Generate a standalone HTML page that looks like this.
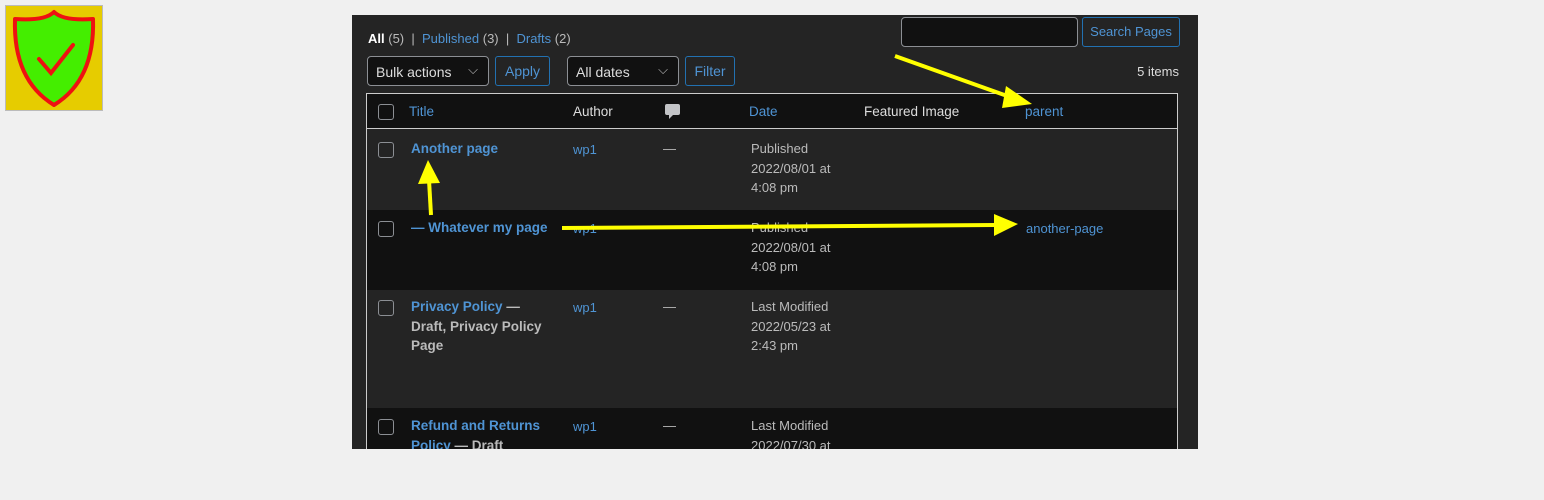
<!DOCTYPE html>
<html><head><style>
body{margin:0;width:1544px;height:500px;background:#f0f0f0;position:relative;overflow:hidden;font-family:"Liberation Sans",sans-serif;font-size:13px}
.p{position:absolute;left:352px;top:15px;width:846px;height:434px;background:#242424;overflow:hidden}
.a{position:absolute;white-space:nowrap}
.l{color:#4f94d4}
.w{color:#ddd}
.g{color:#bbb}
.box{position:absolute;border:1px solid #8c8f94;border-radius:4px;box-sizing:border-box}
.btn{position:absolute;border:1px solid #2271b1;border-radius:3px;box-sizing:border-box;color:#4f94d4;text-align:center}
.cb{position:absolute;width:14px;height:14px;border:1px solid #8c8f94;border-radius:3px;left:26px}
.row{position:absolute;left:14px;width:812px}
.t{font-size:13.5px}
</style></head><body>
<svg style="position:absolute;left:5px;top:5px" width="98" height="106"><rect x="0.5" y="0.5" width="97" height="105" fill="#e6cc00" stroke="#bbb"/>
<path d="M49 7 Q40 16 10 14 Q8 75 49 100 Q90 75 88 14 Q58 16 49 7Z" fill="#44ee00" stroke="#ee1111" stroke-width="4" stroke-linejoin="round"/>
<path d="M34 54 L46 68 L68 40" fill="none" stroke="#ee1111" stroke-width="4" stroke-linecap="round"/></svg>
<div class="p">
<div class="a w" style="left:16px;top:16px"><b style="color:#fff">All</b> <span class="g">(5)</span> <span class="g">&nbsp;|&nbsp;</span> <span class="l">Published</span> <span class="g">(3)</span> <span class="g">&nbsp;|&nbsp;</span> <span class="l">Drafts</span> <span class="g">(2)</span></div>
<div class="box" style="left:15px;top:41px;width:122px;height:30px;background:#111"><span class="a w" style="left:8px;top:7px;font-size:14px">Bulk actions</span><span class="a g" style="right:10px;top:5px">⌵</span></div>
<div class="btn" style="left:143px;top:41px;width:55px;height:30px;line-height:28px;font-size:14px">Apply</div>
<div class="box" style="left:215px;top:41px;width:112px;height:30px;background:#111"><span class="a w" style="left:8px;top:7px;font-size:14px">All dates</span><span class="a g" style="right:10px;top:5px">⌵</span></div>
<div class="btn" style="left:333px;top:41px;width:50px;height:30px;line-height:28px;font-size:14px">Filter</div>
<div class="box" style="left:549px;top:2px;width:177px;height:30px;background:#111"></div>
<div class="btn" style="left:730px;top:2px;width:98px;height:30px;line-height:28px">Search Pages</div>
<div class="a w" style="right:19px;top:49px">5 items</div>
<div class="row" style="top:195px;height:80px;background:#111"></div>
<div class="row" style="top:393px;height:80px;background:#111"></div>
<div class="row" style="top:78px;height:36px;background:#111;border:1px solid #ccc;box-sizing:border-box"></div>
<div class="row" style="top:114px;height:330px;border-left:1px solid #ccc;border-right:1px solid #ccc;box-sizing:border-box"></div>
<div class="cb" style="top:89px"></div>
<div class="a l t" style="left:57px;top:89px">Title</div>
<div class="a w t" style="left:221px;top:89px">Author</div>
<svg class="a" style="left:313px;top:89px" width="15" height="16"><path d="M2 0 H13 Q15 0 15 2 V9 Q15 11 13 11 H8 L4 15 V11 H2 Q0 11 0 9 V2 Q0 0 2 0Z" fill="#c3c4c7"/></svg>
<div class="a l t" style="left:397px;top:89px">Date</div>
<div class="a w t" style="left:512px;top:89px">Featured Image</div>
<div class="a l t" style="left:673px;top:89px">parent</div>

<div class="cb" style="top:127px"></div>
<div class="a l t" style="left:59px;top:126px;font-weight:bold">Another page</div>
<div class="a l" style="left:221px;top:127px">wp1</div><div class="a g" style="left:311px;top:126px">—</div>
<div class="a g" style="left:399px;top:124px;line-height:19.5px">Published<br>2022/08/01 at<br>4:08 pm</div>

<div class="cb" style="top:206px"></div>
<div class="a l t" style="left:59px;top:205px;font-weight:bold">— Whatever my page</div>
<div class="a l" style="left:221px;top:206px">wp1</div><div class="a g" style="left:311px;top:205px">—</div>
<div class="a g" style="left:399px;top:203px;line-height:19.5px">Published<br>2022/08/01 at<br>4:08 pm</div>
<div class="a l" style="left:674px;top:206px">another-page</div>

<div class="cb" style="top:285px"></div>
<div class="a t" style="left:59px;top:282px;font-weight:bold;line-height:19.5px;color:#bbb"><span class="l">Privacy Policy</span> —<br>Draft, Privacy Policy<br>Page</div>
<div class="a l" style="left:221px;top:285px">wp1</div><div class="a g" style="left:311px;top:284px">—</div>
<div class="a g" style="left:399px;top:282px;line-height:19.5px">Last Modified<br>2022/05/23 at<br>2:43 pm</div>

<div class="cb" style="top:404px"></div>
<div class="a t" style="left:59px;top:401px;font-weight:bold;line-height:19.5px;color:#bbb"><span class="l">Refund and Returns<br>Policy</span> — Draft</div>
<div class="a l" style="left:221px;top:404px">wp1</div><div class="a g" style="left:311px;top:403px">—</div>
<div class="a g" style="left:399px;top:401px;line-height:19.5px">Last Modified<br>2022/07/30 at</div>
</div>
<svg style="position:absolute;left:0;top:0" width="1544" height="500">
<g stroke="#ffff00" stroke-width="4" fill="#ffff00">
<line x1="895" y1="56" x2="1010" y2="97"/><polygon points="1032,104 1006,86 1002,108" stroke="none"/>
<line x1="431" y1="215" x2="429" y2="180"/><polygon points="428,160 418,184 440,183" stroke="none"/>
<line x1="562" y1="228" x2="995" y2="225"/><polygon points="1018,224 994,214 994,236" stroke="none"/>
</g></svg>
</body></html>
